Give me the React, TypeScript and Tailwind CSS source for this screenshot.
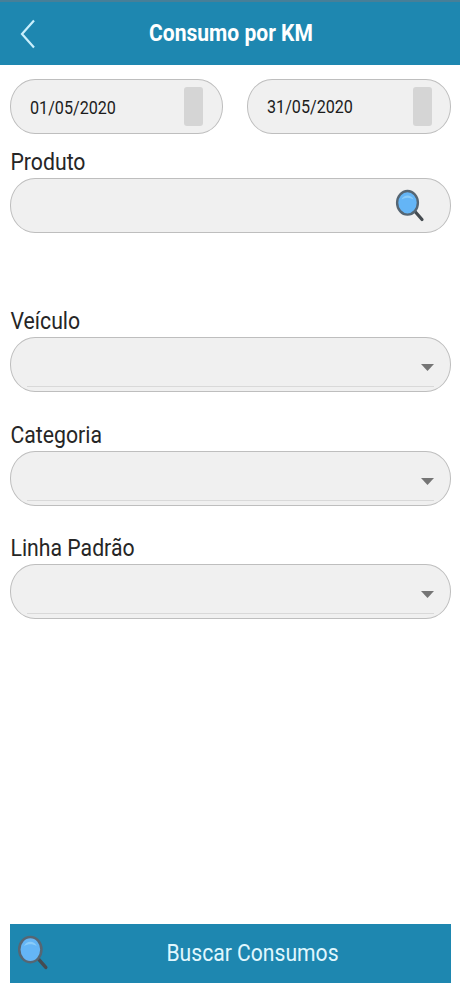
import { useState } from "react";

const fieldClass =
  "h-[55px] w-full rounded-[25px/27px] border border-[#bebebe] bg-[#f0f0f0] outline-none";

const SearchIcon = ({ className }: { className?: string }) => (
  <svg className={className} viewBox="0 0 30 34" fill="none">
    <path d="M20 22.5L27 30.5" stroke="#454b50" strokeWidth="3.2" strokeLinecap="round" />
    <ellipse cx="12.5" cy="13.8" rx="10.4" ry="11.8" fill="#64b5f6" stroke="#566673" strokeWidth="2.4" />
    <path d="M6.5 10.5C8 7.5 10 6.5 12.5 6.5s4.5 1 6 4c-4-2.2-8-2.2-12 0z" fill="#8accf9" />
  </svg>
);

const DateField = ({ value, className }: { value: string; className: string }) => (
  <div className={`${fieldClass} flex justify-between ${className}`}>
    <span className="origin-left scale-x-[0.85] whitespace-nowrap text-[19px] leading-[22px] text-[#1c1c1c]">
      {value}
    </span>
    <span className="h-[39px] w-[19px] rounded-[3px] bg-[#d5d5d5]" />
  </div>
);

const Label = ({ text }: { text: string }) => (
  <div className="flex h-8 items-center">
    <span className="origin-left scale-x-[0.885] whitespace-nowrap pl-[0.5px] text-2xl text-[#262626]">
      {text}
    </span>
  </div>
);

const SelectField = ({ label }: { label: string }) => (
  <div>
    <Label text={label} />
    <button className={`${fieldClass} flex flex-col px-4 pb-1`} aria-label={label}>
      <span className="flex w-full flex-1 items-center justify-end border-b border-[#d9d9d9] pt-[11px]">
        <svg className="h-[7px] w-[13px]" viewBox="0 0 13 7">
          <path d="M0 0h13L6.5 7z" fill="#757575" />
        </svg>
      </span>
    </button>
  </div>
);

const App = () => {
  const [product, setProduct] = useState("");

  return (
    <div className="flex h-[996px] w-[460px] flex-col bg-white font-['Roboto',sans-serif]">
      <header className="grid h-[65px] grid-cols-[60px_1fr_58px] items-center border-t-2 border-[#477f98] bg-[#1e87b0]">
        <button className="pl-5" aria-label="Voltar">
          <svg className="h-[30px] w-4" viewBox="0 0 16 30" fill="none">
            <path d="M14 1.5L2 15l12 13.5" stroke="#c9effc" strokeWidth="2.2" />
          </svg>
        </button>
        <h1 className="scale-x-[0.915] whitespace-nowrap pt-0.5 text-center text-[23px] font-bold text-white">
          Consumo por KM
        </h1>
      </header>

      <main className="flex flex-1 flex-col pt-[14px] pr-[9px] pl-2.5">
        <div className="grid grid-cols-[213px_204px] justify-between">
          <DateField value="01/05/2020" className="pt-[7px] pr-[19px] pl-[19px] [&>span:first-child]:mt-[10px]" />
          <DateField value="31/05/2020" className="pt-[7px] pr-[18px] pl-[19px] [&>span:first-child]:mt-[9px]" />
        </div>

        <div className="mt-3">
          <Label text="Produto" />
          <div className={`${fieldClass} flex items-center pr-[25px] pl-5`}>
            <input
              className="min-w-0 flex-1 bg-transparent outline-none"
              aria-label="Produto"
              value={product}
              onChange={(e) => setProduct(e.target.value)}
            />
            <SearchIcon className="h-[34px] w-[30px]" />
          </div>
        </div>

        <div className="mt-[72.25px] flex flex-col gap-[26.5px]">
          <SelectField label="Veículo" />
          <SelectField label="Categoria" />
          <SelectField label="Linha Padrão" />
        </div>

        <button className="mt-auto mb-[13px] grid h-[59px] grid-cols-[37px_1fr] items-center bg-[#1e87b0] pb-0.5 pl-[7px]">
          <SearchIcon className="h-[38px] w-8" />
          <span className="scale-x-[0.88] whitespace-nowrap text-2xl text-[#e0f7fe]">
            Buscar Consumos
          </span>
        </button>
      </main>
    </div>
  );
};

export default App;
